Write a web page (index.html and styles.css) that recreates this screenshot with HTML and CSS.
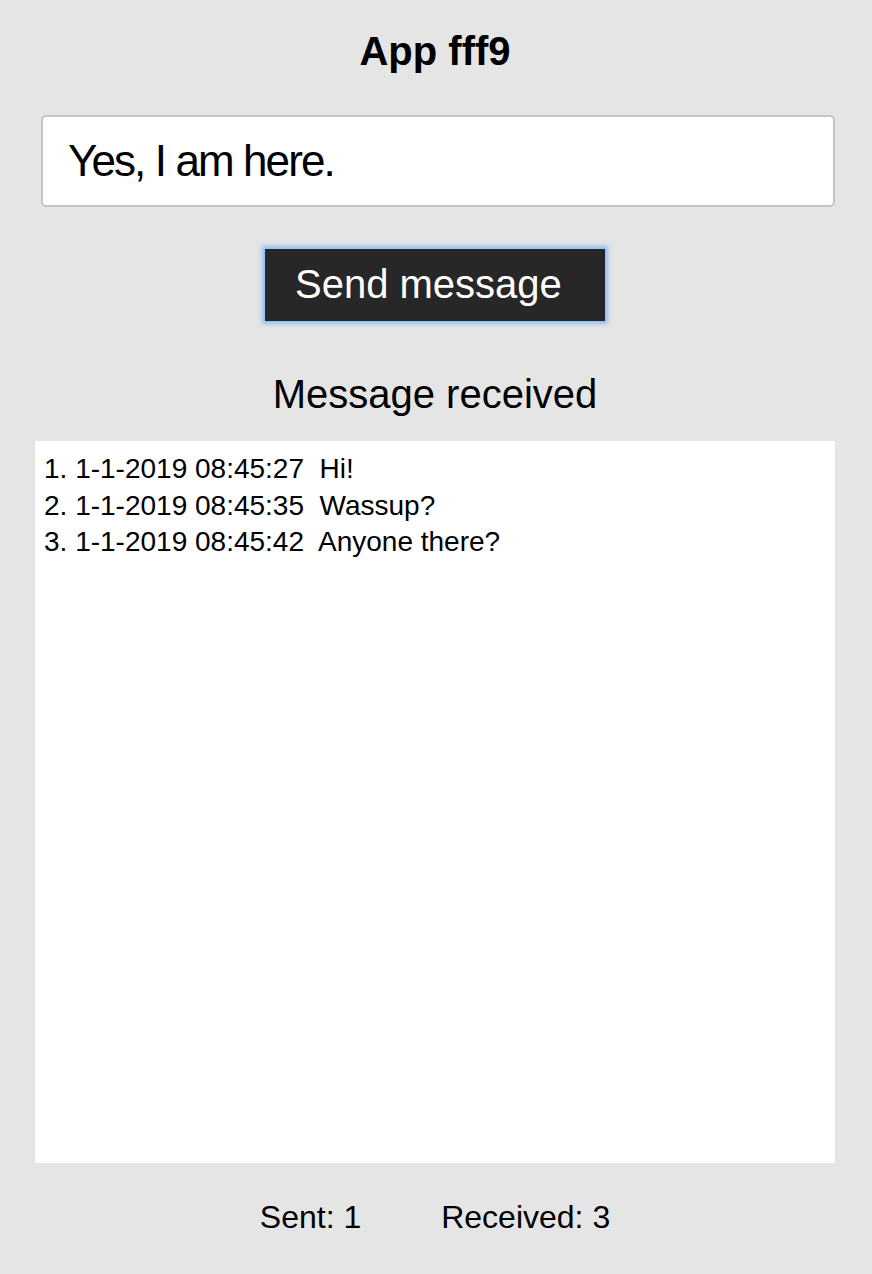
FILE: index.html
```html
<!DOCTYPE html>
<html lang="en">
<head>
<meta charset="utf-8">
<title>App fff9</title>
<link rel="stylesheet" href="styles.css">
</head>
<body>
<main class="app">
  <h1 class="title">App fff9</h1>
  <input class="msg-input" type="text" value="Yes, I am here.">
  <div class="actions">
    <button class="send-btn" type="button">Send message</button>
  </div>
  <h2 class="section-title">Message received</h2>
  <div class="messages">
    <div class="msg">1. 1-1-2019 08:45:27  Hi!</div>
    <div class="msg">2. 1-1-2019 08:45:35  Wassup?</div>
    <div class="msg">3. 1-1-2019 08:45:42  Anyone there?</div>
  </div>
  <div class="stats">
    <span class="stat">Sent: 1</span>
    <span class="stat">Received: 3</span>
  </div>
</main>
</body>
</html>
```

FILE: styles.css
```css
html, body {
  margin: 0;
  padding: 0;
  background: #e5e5e5;
}

body {
  font-family: "Liberation Sans", Arial, Helvetica, sans-serif;
  color: #000;
}

.app {
  display: flex;
  flex-direction: column;
  padding: 27px 37px 0 35px;
}

.title {
  margin: 0;
  font-size: 40px;
  line-height: 48px;
  font-weight: bold;
  text-align: center;
}

.msg-input {
  box-sizing: border-box;
  margin: 40px 0 0 6px;
  height: 92px;
  width: 794px;
  border: 2px solid #c4c4c0;
  border-radius: 5px;
  background: #fff;
  padding: 0 0 0 25px;
  font-family: "Liberation Sans", Arial, sans-serif;
  font-size: 44px;
  letter-spacing: -1.9px;
  color: #000;
  outline: none;
}

.actions {
  display: flex;
  justify-content: center;
  margin-top: 42px;
}

.send-btn {
  box-sizing: border-box;
  height: 72px;
  width: 340px;
  padding: 0 42px 2px 30px;
  border: none;
  background: #272727;
  color: #fff;
  font-family: "Liberation Sans", Arial, sans-serif;
  font-size: 40px;
  text-align: left;
  box-shadow: 0 0 4px 3px rgba(110, 175, 255, 0.7);
  cursor: pointer;
}

.section-title {
  margin: 49px 0 0;
  font-size: 40px;
  line-height: 48px;
  font-weight: normal;
  text-align: center;
}

.messages {
  box-sizing: border-box;
  margin-top: 23px;
  height: 722px;
  background: #fff;
  padding: 10px 9px;
}

.msg {
  font-size: 28px;
  line-height: 36.7px;
  white-space: pre;
}

.stats {
  display: flex;
  justify-content: center;
  gap: 80px;
  margin-top: 34px;
  font-size: 32px;
  line-height: 40px;
}
```
